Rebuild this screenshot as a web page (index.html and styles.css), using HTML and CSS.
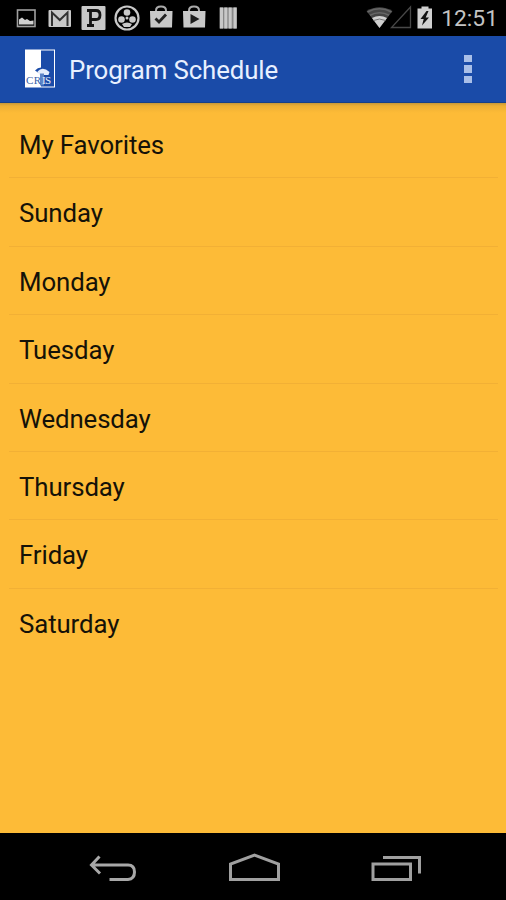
FILE: index.html
```html
<!DOCTYPE html>
<html lang="en">
<head>
    <meta charset="UTF-8">
    <meta name="viewport" content="width=device-width, initial-scale=1.0">
    <title>Program Schedule</title>
    <link rel="stylesheet" href="styles.css">
</head>
<body>
    <div class="screen">
        <div class="status-bar">
            <div class="notifications">
                <!-- picture -->
                <svg class="icon" viewBox="0 0 26 36">
                    <rect x="4.5" y="10" width="17.5" height="16.5" fill="#000" stroke="#a0a0a0" stroke-width="1.6"/>
                    <path d="M6 24.5v-5l3-2 3 2.500 2-1 3 2 3.500-.5v4z" fill="#d0d0d0"/>
                </svg>
                <!-- mail -->
                <svg class="icon" viewBox="0 0 26 36">
                    <rect x="1.500" y="10" width="22.500" height="17" rx="1" fill="#c8c8c8"/>
                    <path d="M5 26V12.500L12.800 20 20.500 12.500V26" fill="none" stroke="#333" stroke-width="2"/>
                </svg>
                <!-- parking -->
                <svg class="icon" viewBox="0 0 26 36">
                    <rect x="1.500" y="6" width="24" height="24" rx="1" fill="#c8c8c8"/>
                    <path d="M7 10.500h9q4 0 4 4.500t-4 4.500h-4.500M10.500 10.500v15M7 25.500h7" fill="none" stroke="#151515" stroke-width="2.800"/>
                </svg>
                <!-- reel -->
                <svg class="icon" viewBox="0 0 26 36">
                    <circle cx="13" cy="18" r="11.500" fill="#000" stroke="#c8c8c8" stroke-width="2.200"/>
                    <g fill="#c8c8c8">
                        <circle cx="13" cy="12.500" r="3.300"/>
                        <circle cx="7.500" cy="19.500" r="3.300"/>
                        <circle cx="18.500" cy="19.500" r="3.300"/>
                        <circle cx="13" cy="18" r="1.500"/>
                        <path d="M8 24q5-3 10 0l-2 3h-6z"/>
                    </g>
                </svg>
                <!-- bag with check -->
                <svg class="icon" viewBox="0 0 26 36">
                    <path d="M8 12v-1.500q0-4 5-4t5 4V12" fill="none" stroke="#aaa" stroke-width="2"/>
                    <path d="M2 11h22.500l-.5 16.500h-21.500z" fill="#c8c8c8"/>
                    <path d="M7.500 18.500l3.500 3.500 7-7.500" fill="none" stroke="#222" stroke-width="2.800"/>
                </svg>
                <!-- bag with play -->
                <svg class="icon" viewBox="0 0 26 36">
                    <path d="M8 12v-1.500q0-4 5-4t5 4V12" fill="none" stroke="#aaa" stroke-width="2"/>
                    <path d="M2 11h22.500l-.5 16.500h-21.500z" fill="#c8c8c8"/>
                    <path d="M9.500 14l9 5-9 5z" fill="#1c1c1c"/>
                </svg>
                <!-- barcode -->
                <svg class="icon" viewBox="0 0 26 36">
                    <rect x="4.500" y="7.500" width="17.500" height="21" fill="#888"/>
                    <path d="M6.500 7.500v21M10.800 7.500v21M15.200 7.500v21M20 7.500v21" stroke="#c8c8c8" stroke-width="3"/>
                </svg>
            </div>
            <div class="system">
                <svg class="wifi" viewBox="0 0 28 36">
                    <path d="M.5 11q13-7.500 26 0L13.500 28z" fill="#454545"/>
                    <path d="M1.500 12q12-6.500 24 0M4 15.200q9.500-5 19 0" fill="none" stroke="#666" stroke-width="1.600"/>
                    <path d="M6 18q7.500-4 15 0L13.500 28z" fill="#d0d0d0"/>
                    <path d="M7.500 20.500q6-3 12 0" fill="none" stroke="#777" stroke-width="1"/>
                </svg>
                <svg class="signal" viewBox="0 0 22 36">
                    <path d="M1.500 27.500H20.500V7z" fill="none" stroke="#484848" stroke-width="1.300"/>
                </svg>
                <svg class="battery" viewBox="0 0 16 36">
                    <path d="M.5 8.500h4v-2h7v2h3.500V28.500H.5z" fill="#d0d0d0"/>
                    <path d="M9.500 11L3.500 19h3.200L5 25.500l7-8H8.700L11.500 11z" fill="#111"/>
                </svg>
                <span class="clock">12:51</span>
            </div>
        </div>

        <div class="action-bar">
            <svg class="logo" viewBox="0 0 32 42">
                <rect x="1" y="1.500" width="30" height="38" fill="#fff"/>
                <path d="M17 2.500H30V38.500H17z" fill="#1a4ba8"/>
                <path d="M11 22.500q3-3.500 7-3v5h-4z" fill="#1a4ba8"/>
                <path d="M13.500 23.500q5-5.500 12 .5l-1 3h-9z" fill="#e6eefb"/>
                <path d="M16 25.500h4v12h-4z" fill="#5d84c6"/>
                <text class="logo-text" x="2" y="36" textLength="15" fill="#3a62a8">CR</text>
                <text class="logo-text" x="18" y="36" textLength="9" fill="#e6eefb">IS</text>
            </svg>
            <h1 class="title">Program Schedule</h1>
            <div class="overflow">
                <span></span>
                <span></span>
                <span></span>
            </div>
        </div>

        <ul class="schedule">
            <li>My Favorites</li>
            <li>Sunday</li>
            <li>Monday</li>
            <li>Tuesday</li>
            <li>Wednesday</li>
            <li>Thursday</li>
            <li>Friday</li>
            <li>Saturday</li>
        </ul>

        <div class="nav-bar">
            <svg class="nav-icon" viewBox="0 0 52 32">
                <path d="M12.500 3.500L4.500 12l8.500 8.500M4.500 12H41q6.500 0 6.500 7t-6.500 7.500H22.500" fill="none" stroke="#a8a8a8" stroke-width="3"/>
            </svg>
            <svg class="nav-icon" viewBox="0 0 52 32">
                <path d="M1.500 26.500V11L25.500 2l24 9v15.500z" fill="none" stroke="#a0a0a0" stroke-width="3"/>
            </svg>
            <svg class="nav-icon" viewBox="0 0 52 32">
                <path d="M2 11h37.500v15.500H2zM12 4.500h36.500V20.500" fill="none" stroke="#a0a0a0" stroke-width="3"/>
            </svg>
        </div>
    </div>
</body>
</html>
```
FILE: styles.css
```css
body {
    margin: 0;
    font-family: Roboto, sans-serif;
    background-color: #000;
}

.screen {
    display: flex;
    flex-direction: column;
    width: 506px;
    height: 900px;
    overflow: hidden;
}

/* Status bar */
.status-bar {
    display: flex;
    justify-content: space-between;
    height: 36px;
    padding: 0 8px 0 13px;
    background-color: #000;
}

.notifications {
    display: flex;
    gap: 7.65px;
}

.icon {
    width: 26px;
    height: 36px;
}

.system {
    display: flex;
    align-items: center;
}

.wifi {
    width: 28px;
    height: 36px;
}

.signal {
    width: 22px;
    height: 36px;
    margin-left: -4px;
    margin-right: 5px;
}

.battery {
    width: 16px;
    height: 36px;
    margin-right: 8px;
}

.clock {
    padding-top: 2px;
    font-size: 22.8px;
    line-height: 36px;
    color: #c4c4c4;
}

/* Action bar */
.action-bar {
    display: flex;
    align-items: center;
    height: 67px;
    padding: 0 34px 0 24px;
    box-sizing: border-box;
    background-color: #1a4ba8;
    border-bottom: 1px solid #174088;
}

.logo {
    width: 32px;
    height: 42px;
}

.logo-text {
    font-family: "Liberation Serif", serif;
    font-size: 11px;
}

.title {
    flex: 1;
    margin: 0 0 0 13px;
    padding-top: 2px;
    font-size: 25.8px;
    font-weight: 400;
    letter-spacing: -0.1px;
    line-height: 36px;
    color: #e8f0ff;
}

.overflow {
    display: flex;
    flex-direction: column;
    gap: 3px;
}

.overflow span {
    width: 8px;
    height: 7.6px;
    background-color: #a9bfe8;
}

/* Day list */
.schedule {
    flex: 1;
    margin: 0;
    padding: 7px 8px 0 9px;
    list-style: none;
    background: linear-gradient(#c89838, #eeb034 3px, #fdbb37 10px);
}

.schedule li {
    height: 68.4px;
    padding-left: 10px;
    box-sizing: border-box;
    border-bottom: 1px solid #f2b035;
    font-size: 25.8px;
    letter-spacing: -0.1px;
    line-height: 70px;
    color: #151208;
}

.schedule li:last-child {
    border-bottom: none;
}

/* Navigation bar */
.nav-bar {
    display: flex;
    justify-content: center;
    align-items: center;
    gap: 90px;
    height: 67px;
    padding: 4px 0 0 3px;
    box-sizing: border-box;
    background-color: #000;
}

.nav-icon {
    width: 52px;
    height: 32px;
}
```
